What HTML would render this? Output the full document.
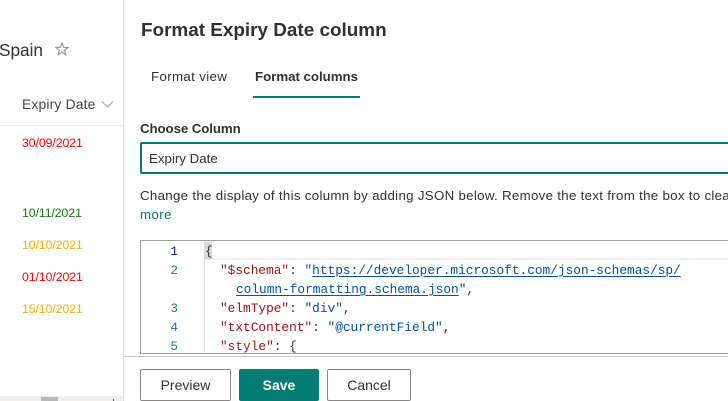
<!DOCTYPE html>
<html><head><meta charset="utf-8">
<style>
html,body{margin:0;padding:0;background:#fff}
#p{position:relative;width:728px;height:401px;overflow:hidden;background:#fff;font-family:"Liberation Sans",sans-serif;color:#323130}
#p div{position:absolute;white-space:pre}
.d{font-size:12.3px;left:22px;line-height:14px;letter-spacing:-.08px}
.c{font-family:"Liberation Mono",monospace;font-size:12.8px;line-height:19px;height:19px;color:#333}
.n{width:40px;text-align:right;left:138px;font-family:"Liberation Mono",monospace;font-size:12.8px;line-height:19px;color:#237893}
.r{color:#a31515}.b{color:#0451a5}.u{color:#0451a5;text-decoration:underline;text-underline-offset:2px}
.btn{box-sizing:border-box;top:369px;height:32px;border:1px solid #8a8886;border-radius:2px;text-align:center;font-size:14px;line-height:30px;background:#fff}
</style></head><body><div id="p">

<div style="left:-1px;top:39px;font-size:17.2px;line-height:22px;color:#323130">Spain</div>
<svg style="position:absolute;left:54px;top:41px" width="16" height="16" viewBox="0 0 16 16"><path d="M8 2l1.6 4.3 4.5.2-3.5 2.8 1.2 4.4L8 11.2l-3.8 2.5 1.2-4.4-3.5-2.8 4.5-.2z" fill="none" stroke="#8a8886" stroke-width="1"/></svg>
<div style="left:22px;top:96px;font-size:13.8px;line-height:17px;color:#484644;letter-spacing:.2px">Expiry Date</div>
<svg style="position:absolute;left:101px;top:100px" width="13" height="9" viewBox="0 0 13 9"><path d="M1 1.5l5.5 5.5 5.5-5.5" fill="none" stroke="#a19f9d" stroke-width="1"/></svg>
<div style="left:0;top:125px;width:123px;height:1px;background:#edebe9"></div>
<div class="d" style="top:136px;color:#ff0000">30/09/2021</div>
<div class="d" style="top:206px;color:#107c10">10/11/2021</div>
<div class="d" style="top:238px;color:#ffaa00">10/10/2021</div>
<div class="d" style="top:270px;color:#ff0000">01/10/2021</div>
<div class="d" style="top:302px;color:#ffaa00">15/10/2021</div>
<div style="left:0;top:396px;width:123px;height:5px;background:#f0efee"></div>
<div style="left:41px;top:397px;width:17px;height:4px;background:#b9b8b8"></div>
<div style="left:113px;top:399px;width:1px;height:2px;background:#555"></div>
<div style="left:123px;top:0;width:1px;height:401px;background:#e6e5e4"></div>

<div style="left:141px;top:18px;font-size:18.9px;line-height:26px;font-weight:bold;color:#323130">Format Expiry Date column</div>
<div style="left:151px;top:68px;font-size:13.3px;line-height:17px;color:#323130;letter-spacing:.35px">Format view</div>
<div style="left:255px;top:68px;font-size:13.3px;line-height:17px;font-weight:bold;color:#323130;letter-spacing:-.03px">Format columns</div>
<div style="left:253px;top:96px;width:107px;height:2px;background:#037c74"></div>

<div style="left:140px;top:120px;font-size:13.3px;line-height:17px;font-weight:bold;color:#323130;letter-spacing:-.1px">Choose Column</div>
<div style="box-sizing:border-box;left:140px;top:142px;width:600px;height:32px;border:2px solid #037c74;border-radius:2px"></div>
<div style="left:149px;top:150px;font-size:13.3px;line-height:17px;color:#323130">Expiry Date</div>

<div style="left:140px;top:187px;font-size:13.3px;line-height:17px;color:#323130;letter-spacing:.3px">Change the display of this column by adding JSON below. Remove the text from the box to clear</div>
<div style="left:140px;top:206px;font-size:13.3px;line-height:17px;color:#037c74;letter-spacing:.4px">more</div>

<div style="box-sizing:border-box;left:140px;top:240px;width:600px;height:114px;border:1px solid #a19f9d"></div>
<div style="left:205px;top:241px;width:523px;height:19px;background:#fff;border-bottom:2px solid #eeeeee;box-sizing:border-box"></div>
<div style="left:205px;top:242px;width:7px;height:17px;background:#d6dad4"></div>
<div style="left:204px;top:241px;width:1px;height:112px;background:#e2e2e0"></div>

<div class="n" style="top:242px;color:#0b216f">1</div>
<div class="n" style="top:261px">2</div>
<div class="n" style="top:299px">3</div>
<div class="n" style="top:318px">4</div>
<div class="n" style="top:337px">5</div>

<div class="c" style="left:205px;top:242px">{</div>
<div class="c" style="left:220px;top:261px"><span class="r">"$schema"</span>: <span class="b">"</span><span class="u">https://developer.microsoft.com/json-schemas/sp/</span></div>
<div class="c" style="left:236px;top:280px"><span class="u">column-formatting.schema.json</span><span class="b">"</span>,</div>
<div class="c" style="left:220px;top:299px"><span class="r">"elmType"</span>: <span class="b">"div"</span>,</div>
<div class="c" style="left:220px;top:318px"><span class="r">"txtContent"</span>: <span class="b">"@currentField"</span>,</div>
<div class="c" style="left:220px;top:337px;height:16px;overflow:hidden"><span class="r">"style"</span>: {</div>

<div style="left:124px;top:356px;width:604px;height:1px;background:#c8c6c4"></div>
<div class="btn" style="left:140px;width:91px">Preview</div>
<div class="btn" style="left:239px;width:80px;background:#037c74;border-color:#037c74;color:#fff;font-weight:bold">Save</div>
<div class="btn" style="left:327px;width:84px">Cancel</div>
</div></body></html>
